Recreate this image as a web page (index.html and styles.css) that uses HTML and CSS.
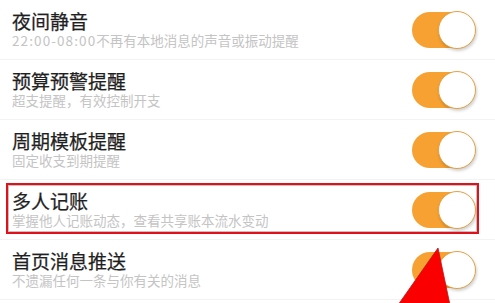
FILE: index.html
```html
<!DOCTYPE html>
<html lang="zh-CN">
<head>
<meta charset="utf-8">
<link rel="stylesheet" href="styles.css">
</head>
<body>
<div class="list">
  <div class="row">
    <div class="text">
      <div class="title">夜间静音</div>
      <div class="sub"><span class="time">22:00-08:00</span>不再有本地消息的声音或振动提醒</div>
    </div>
    <div class="switch"><div class="knob"></div></div>
  </div>
  <div class="row">
    <div class="text">
      <div class="title">预算预警提醒</div>
      <div class="sub">超支提醒，有效控制开支</div>
    </div>
    <div class="switch"><div class="knob"></div></div>
  </div>
  <div class="row">
    <div class="text">
      <div class="title">周期模板提醒</div>
      <div class="sub">固定收支到期提醒</div>
    </div>
    <div class="switch"><div class="knob"></div></div>
  </div>
  <div class="row highlighted">
    <div class="text">
      <div class="title">多人记账</div>
      <div class="sub">掌握他人记账动态，查看共享账本流水变动</div>
    </div>
    <div class="switch"><div class="knob"></div></div>
  </div>
  <div class="row">
    <div class="text">
      <div class="title">首页消息推送</div>
      <div class="sub">不遗漏任何一条与你有关的消息</div>
    </div>
    <div class="switch"><div class="knob"></div></div>
  </div>
</div>
<svg class="arrow" width="60" height="60" viewBox="0 0 60 60">
  <polygon points="40,0 0,57 52,57" fill="#fb0000" stroke="#b31818" stroke-width="0.8"/>
</svg>
</body>
</html>
```
FILE: styles.css
```css
html, body {
  margin: 0;
  padding: 0;
  background: #ffffff;
}
body {
  width: 495px;
  height: 303px;
  overflow: hidden;
  position: relative;
  font-family: "Noto Sans CJK SC", "Noto Sans", sans-serif;
}
.list {
  display: flex;
  flex-direction: column;
}
.row {
  height: 59px;
  border-bottom: 1px solid #f3f3f3;
  display: flex;
  align-items: center;
  justify-content: space-between;
  padding: 0 21px 0 12px;
  position: relative;
}
.text {
  display: flex;
  flex-direction: column;
  margin-top: -1px;
}
.title {
  font-size: 19px;
  line-height: 23px;
  color: #1f1f1f;
  -webkit-text-stroke: 0.25px #1f1f1f;
}
.sub {
  font-size: 13.5px;
  line-height: 17px;
  color: #c4c4c4;
}
.time {
  letter-spacing: 1.1px;
}
.switch {
  width: 62px;
  height: 36px;
  border-radius: 18px;
  background: #f6a131;
  position: relative;
}
.knob {
  position: absolute;
  right: -2px;
  top: -1px;
  width: 36px;
  height: 36px;
  border-radius: 50%;
  background: #ffffff;
  border: 1px solid #e3a146;
  box-shadow: 1px 2px 3px rgba(0, 0, 0, 0.18);
}
.highlighted::after {
  content: "";
  position: absolute;
  left: 6px;
  top: 3px;
  width: 469px;
  height: 47px;
  border: 2px solid #e3101a;
  box-shadow: inset 0 0 0 1px rgba(120, 120, 120, 0.45);
}
.arrow {
  position: absolute;
  left: 398px;
  top: 248px;
}
```
